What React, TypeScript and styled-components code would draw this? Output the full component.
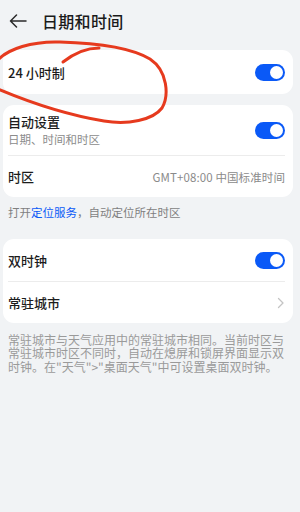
import React from "react";
import styled, { createGlobalStyle } from "styled-components";

const GlobalStyle = createGlobalStyle`
  html, body {
    margin: 0;
    padding: 0;
    background: #f1f3f5;
  }
  body {
    font-family: "Noto Sans CJK SC", "Noto Sans", sans-serif;
    color: #1c1c1c;
  }
  * { box-sizing: border-box; }
`;

const Page = styled.div`
  position: relative;
  width: 300px;
  height: 512px;
  overflow: hidden;
  background: #f1f3f5;
  padding: 0 7px 0 3px;
  display: flex;
  flex-direction: column;
`;

const Header = styled.div`
  height: 42px;
  display: flex;
  align-items: center;
  gap: 15px;
  padding-left: 6px;
  margin-bottom: 8px;
`;

const Title = styled.div`
  font-size: 16px;
  font-weight: 500;
  color: #1a1a1a;
  letter-spacing: 0.3px;
`;

const Card = styled.div<{ $mt?: number }>`
  background: #ffffff;
  border-radius: 11px;
  padding: 0 8px 0 5px;
  margin-top: ${(p) => p.$mt ?? 0}px;
  display: flex;
  flex-direction: column;
`;

const Row = styled.div<{ $h: number; $divider?: boolean }>`
  height: ${(p) => p.$h}px;
  display: flex;
  align-items: center;
  justify-content: space-between;
  border-top: ${(p) => (p.$divider ? "1px solid #ececec" : "none")};
`;

const TextCol = styled.div`
  display: flex;
  flex-direction: column;
  gap: 1px;
`;

const Label = styled.div`
  font-size: 13px;
  font-weight: 500;
  color: #1c1c1c;
  line-height: 17px;
`;

const Sub = styled.div`
  font-size: 11.5px;
  color: #8c8c8c;
  line-height: 16px;
`;

const Value = styled.div`
  font-size: 11.5px;
  color: #8a8a8a;
  letter-spacing: 0.1px;
`;

const Toggle = styled.div`
  width: 30px;
  height: 17px;
  border-radius: 9px;
  background: #0a59f7;
  display: flex;
  align-items: center;
  justify-content: flex-end;
  padding-right: 2px;
`;

const Knob = styled.div`
  width: 13px;
  height: 13px;
  border-radius: 50%;
  background: #ffffff;
`;

const Hint = styled.div`
  font-size: 11.5px;
  color: #7f7f7f;
  line-height: 16px;
  padding-left: 5px;
  margin-top: 7px;
`;

const Link = styled.span`
  color: #0a59f7;
`;

const Note = styled.div`
  font-size: 12px;
  color: #9a9a9a;
  line-height: 13.4px;
  padding-left: 5px;
  margin-top: 10px;
  width: 285px;
`;

const Overlay = styled.svg`
  position: absolute;
  left: 0;
  top: 0;
  pointer-events: none;
`;

const Switch = () => (
  <Toggle>
    <Knob />
  </Toggle>
);

export default function App() {
  return (
    <>
      <GlobalStyle />
      <Page>
        <Header>
          <svg width="18" height="14" viewBox="0 0 18 14" fill="none">
            <path
              d="M17 7H1.5M7.5 1L1.5 7l6 6"
              stroke="#2a2a2a"
              strokeWidth="1.5"
              strokeLinecap="round"
              strokeLinejoin="round"
            />
          </svg>
          <Title>日期和时间</Title>
        </Header>

        <Card>
          <Row $h={44}>
            <Label>24 小时制</Label>
            <Switch />
          </Row>
        </Card>

        <Card $mt={11}>
          <Row $h={50}>
            <TextCol>
              <Label>自动设置</Label>
              <Sub>日期、时间和时区</Sub>
            </TextCol>
            <Switch />
          </Row>
          <Row $h={42} $divider>
            <Label>时区</Label>
            <Value>GMT+08:00 中国标准时间</Value>
          </Row>
        </Card>

        <Hint>
          打开<Link>定位服务</Link>，自动定位所在时区
        </Hint>

        <Card $mt={19}>
          <Row $h={42}>
            <Label>双时钟</Label>
            <Switch />
          </Row>
          <Row $h={42} $divider>
            <Label>常驻城市</Label>
            <svg width="8" height="12" viewBox="0 0 8 12" fill="none">
              <path
                d="M1.5 1.5L6 6l-4.5 4.5"
                stroke="#c4c4c4"
                strokeWidth="1.3"
                strokeLinecap="round"
                strokeLinejoin="round"
              />
            </svg>
          </Row>
        </Card>

        <Note>
          常驻城市与天气应用中的常驻城市相同。当前时区与常驻城市时区不同时，自动在熄屏和锁屏界面显示双时钟。在"天气"&gt;"桌面天气"中可设置桌面双时钟。
        </Note>

        <Overlay width="300" height="512" viewBox="0 0 300 512">
          <path
            d="M-2 60 C8 49 32 41 60 42 C95 43 130 47 150 59 C168 71 169 96 162 108 C153 120 128 125 104 121 C74 116 36 105 -2 89"
            stroke="#e63a1e"
            strokeWidth="3"
            fill="none"
            strokeLinecap="round"
          />
          <path
            d="M63 62 C72 55 85 48 99 48"
            stroke="#e63a1e"
            strokeWidth="3"
            fill="none"
            strokeLinecap="round"
          />
        </Overlay>
      </Page>
    </>
  );
}
